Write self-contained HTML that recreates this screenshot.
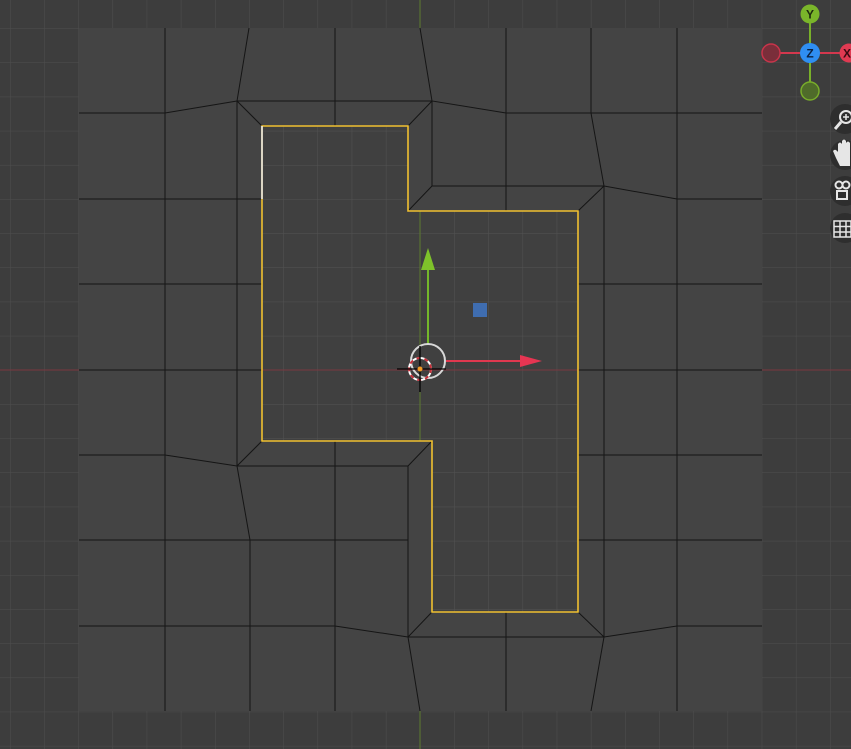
<!DOCTYPE html>
<html><head><style>
html,body{margin:0;padding:0;background:#3d3d3d;overflow:hidden}
svg{display:block}
</style></head><body>
<svg width="851" height="749" viewBox="0 0 851 749" xmlns="http://www.w3.org/2000/svg">
<defs>
<pattern id="g" x="10" y="28.3" width="34.17" height="34.17" patternUnits="userSpaceOnUse">
<path d="M0 0H34.17M0 0V34.17" stroke="#4e4e4e" stroke-width="1" fill="none"/>
</pattern>
<pattern id="g2" x="10" y="28.3" width="34.17" height="34.17" patternUnits="userSpaceOnUse">
<path d="M0 0H34.17M0 0V34.17" stroke="#535353" stroke-width="1" fill="none"/>
</pattern>
</defs>
<rect width="851" height="749" fill="#3d3d3d"/>
<rect width="851" height="749" fill="url(#g)"/>
<rect x="79" y="28" width="683" height="683" fill="#444"/>
<path d="M262 126H408V211H578V612H432V441H262Z" fill="#404040"/>
<path d="M262 126H408V211H578V612H432V441H262Z" fill="url(#g2)"/>
<line x1="0" y1="370" x2="79" y2="370" stroke="#7a3840" stroke-width="1"/>
<line x1="762" y1="370" x2="851" y2="370" stroke="#7a3840" stroke-width="1"/>
<line x1="262" y1="370" x2="578" y2="370" stroke="#7a3840" stroke-width="1"/>
<line x1="420" y1="0" x2="420" y2="28" stroke="#5c7a2e" stroke-width="1"/>
<line x1="420" y1="711" x2="420" y2="749" stroke="#5c7a2e" stroke-width="1"/>
<line x1="420" y1="211" x2="420" y2="441" stroke="#5c7a2e" stroke-width="1"/>
<g stroke="#151515" stroke-width="1" fill="none">
<line x1="165" y1="28" x2="165" y2="711"/>
<path d="M79 113H165L237 101M79 199H262M79 284H262M79 370H262M79 455H165L237 466"/>
<path d="M249 28L237 101V466L250 540V711"/>
<path d="M237 101H432V186H604M237 466H408V637H604V186"/>
<path d="M335 28V126M420 28L432 101L506 113M506 28V211"/>
<path d="M506 113H591L604 186M591 28V113M591 113H762"/>
<path d="M604 186L677 199H762M677 28V711M578 284H762M578 370H762M578 455H762M578 540H762"/>
<path d="M604 637L677 626H762"/>
<path d="M79 540H408M79 626H335L408 637M335 441V711"/>
<path d="M408 637L420 711M506 612V711M604 637L591 711"/>
<path d="M237 101L262 126M432 101L408 126M432 186L408 211M604 186L578 211M604 637L578 612M408 637L432 612M408 466L432 441M237 466L262 441"/>
</g>
<path d="M262 126H408V211H578V612H432V441H262Z" fill="none" stroke="#f0c030" stroke-width="1.6"/>
<line x1="262" y1="126" x2="262" y2="199" stroke="#e8e8e8" stroke-width="1.6"/>
<line x1="428" y1="345" x2="428" y2="268" stroke="#74b82a" stroke-width="2"/>
<path d="M428 248L421 270H435Z" fill="#7ec22a"/>
<line x1="446" y1="361" x2="522" y2="361" stroke="#e0384f" stroke-width="2"/>
<path d="M542 361L520 355V367Z" fill="#e63552"/>
<circle cx="428" cy="361" r="17" fill="none" stroke="#d8d8d8" stroke-width="2"/>
<rect x="473" y="303" width="14" height="14" fill="#3f6db0"/>
<circle cx="420" cy="369" r="11" fill="none" stroke="#fff" stroke-width="2"/>
<circle cx="420" cy="369" r="11" fill="none" stroke="#c8303a" stroke-width="2" stroke-dasharray="4 4"/>
<path d="M397 369H446M420 346V392" stroke="#000" stroke-width="1.3"/>
<circle cx="420" cy="369" r="2.5" fill="#f39a25"/>
<line x1="771" y1="53" x2="851" y2="53" stroke="#d3384e" stroke-width="2"/>
<line x1="810" y1="14" x2="810" y2="91" stroke="#79b02a" stroke-width="2"/>
<circle cx="771" cy="53" r="9" fill="#7a2e3a" stroke="#c8344a" stroke-width="1.5"/>
<circle cx="810" cy="91" r="9" fill="#4f6b2a" stroke="#78ac2a" stroke-width="1.5"/>
<circle cx="810" cy="14" r="9.5" fill="#7ab52a"/>
<circle cx="810" cy="53" r="10" fill="#2f8ef2"/>
<circle cx="849" cy="53" r="9.5" fill="#e03a52"/>
<text x="810" y="18.5" font-family="Liberation Sans,sans-serif" font-size="12" font-weight="bold" fill="#1e2a10" text-anchor="middle">Y</text>
<text x="810" y="57.5" font-family="Liberation Sans,sans-serif" font-size="12" font-weight="bold" fill="#0c2140" text-anchor="middle">Z</text>
<text x="847" y="57.5" font-family="Liberation Sans,sans-serif" font-size="12" font-weight="bold" fill="#3a0a12" text-anchor="middle">X</text>
<g fill="#2e2e2e">
<circle cx="845" cy="119" r="15"/><circle cx="845" cy="155" r="15"/><circle cx="845" cy="191" r="15"/><circle cx="845" cy="228" r="15"/>
</g>
<g stroke="#e6e6e6" fill="none" stroke-width="2">
<circle cx="846" cy="117" r="6"/><line x1="841" y1="122" x2="835" y2="129" stroke-width="3"/>
<path d="M843 117H849M846 114V120" stroke-width="1.5"/>
</g>
<path d="M836 158L833 151Q835 148 838 152V144Q840 141 842 144V141Q844 138 846 141V143Q848 140 850 143V166H840Z" fill="#e6e6e6"/>
<g fill="none" stroke="#e6e6e6" stroke-width="2">
<circle cx="839" cy="185" r="3.5"/><circle cx="846" cy="185" r="3.5"/>
<rect x="837" y="191" width="10" height="8"/>
<rect x="834" y="221" width="17" height="16" stroke-width="1.5"/>
<path d="M834 226.5H851M834 232H851M840 221V237M846 221V237" stroke-width="1.5"/>
</g>
</svg>
</body></html>
